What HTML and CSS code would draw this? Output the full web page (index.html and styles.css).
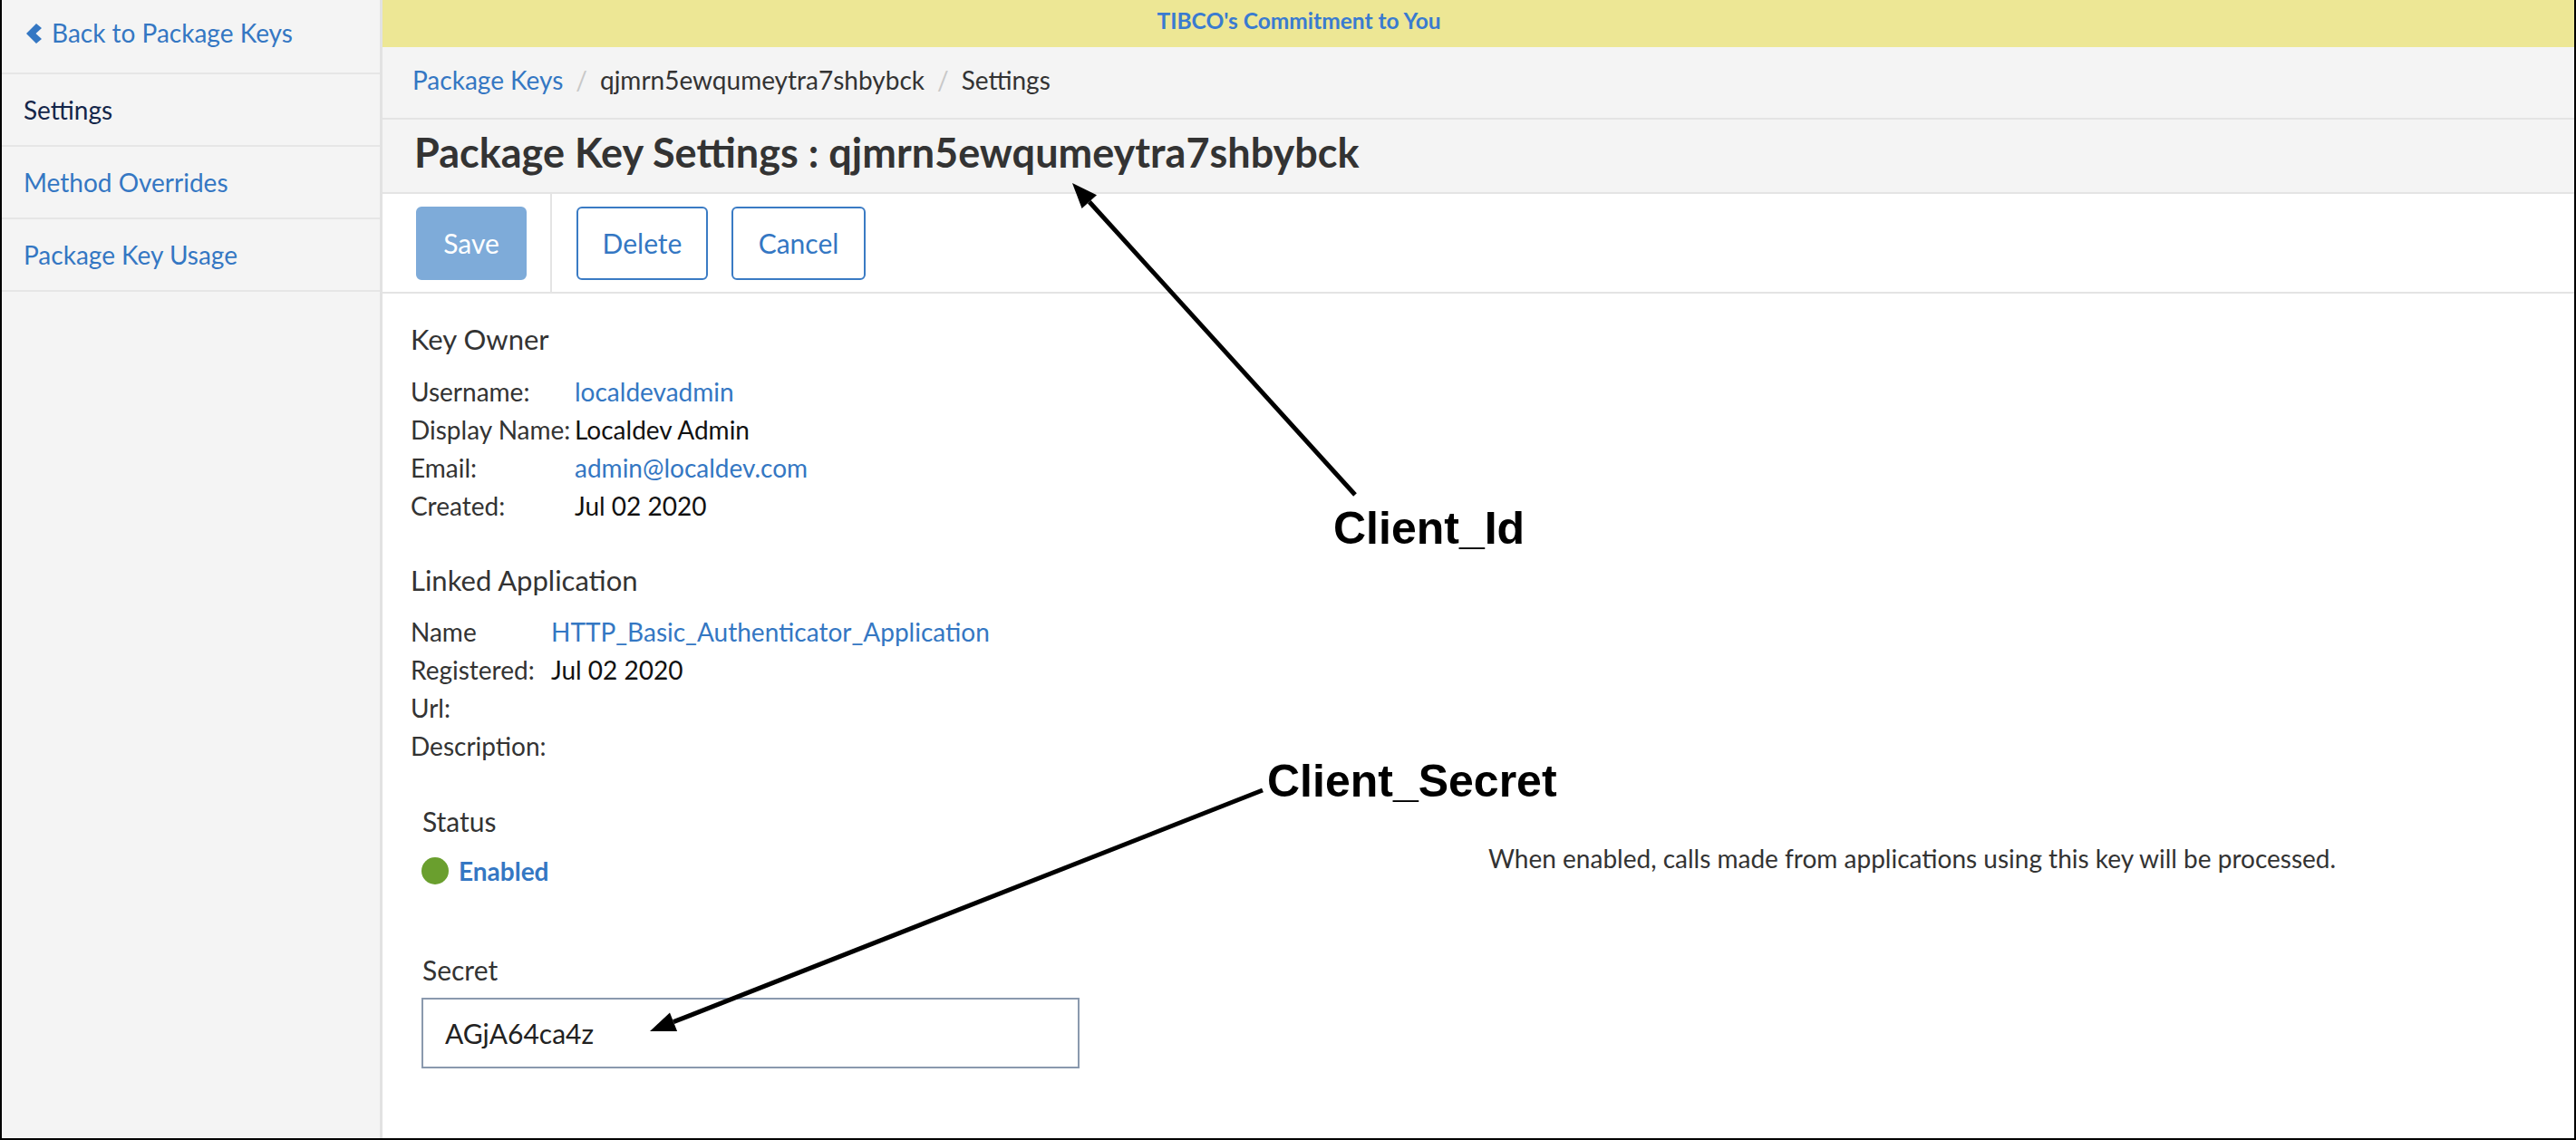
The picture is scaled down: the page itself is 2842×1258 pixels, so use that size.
FILE: index.html
```html
<!DOCTYPE html>
<html>
<head>
<meta charset="utf-8">
<title>Package Key Settings</title>
<link rel="stylesheet" href="styles.css">
</head>
<body>
<div class="frame">
  <aside class="sidebar">
    <a class="side-item back"><svg class="chev" viewBox="0 0 17 22" width="17" height="22"><polygon points="11,0 17,5 10.5,11 17,17 11,22 0,11"/></svg>Back to Package Keys</a>
    <div class="side-item active">Settings</div>
    <a class="side-item">Method Overrides</a>
    <a class="side-item">Package Key Usage</a>
  </aside>
  <main class="main">
    <div class="banner"><a class="banner-link">TIBCO's Commitment to You</a></div>
    <nav class="crumbs">
      <a class="crumb-link">Package Keys</a><span class="sep">/</span><span class="crumb">qjmrn5ewqumeytra7shbybck</span><span class="sep">/</span><span class="crumb">Settings</span>
    </nav>
    <div class="titlebar"><h1 class="title">Package Key Settings : qjmrn5ewqumeytra7shbybck</h1></div>
    <div class="toolbar">
      <div class="tb-primary"><button class="btn btn-save">Save</button></div>
      <div class="tb-secondary">
        <button class="btn btn-outline">Delete</button>
        <button class="btn btn-outline">Cancel</button>
      </div>
    </div>
    <section class="content">
      <h2 class="heading first">Key Owner</h2>
      <div class="info owner">
        <span class="lbl">Username:</span><a class="val link">localdevadmin</a>
        <span class="lbl">Display Name:</span><span class="val">Localdev Admin</span>
        <span class="lbl">Email:</span><a class="val link">admin@localdev.com</a>
        <span class="lbl">Created:</span><span class="val">Jul 02 2020</span>
      </div>
      <h2 class="heading">Linked Application</h2>
      <div class="info app">
        <span class="lbl">Name</span><a class="val link">HTTP_Basic_Authenticator_Application</a>
        <span class="lbl">Registered:</span><span class="val">Jul 02 2020</span>
        <span class="lbl">Url:</span><span class="val"></span>
        <span class="lbl">Description:</span><span class="val"></span>
      </div>
      <div class="status-row">
        <div class="status-col">
          <h2 class="heading sub">Status</h2>
          <div class="enabled"><span class="dot"></span><a class="enabled-link">Enabled</a></div>
          <h2 class="heading sub secret-h">Secret</h2>
          <div class="secret-box">AGjA64ca4z</div>
        </div>
        <div class="help-col">When enabled, calls made from applications using this key will be processed.</div>
      </div>
    </section>
  </main>
  <svg class="annotations" width="2842" height="1258" viewBox="0 0 2842 1258">
    <line x1="1495" y1="546" x2="1201.8" y2="222.7" class="arrow-line"/>
    <polygon points="1183,202 1210,215.3 1193.6,230.1" class="arrow-head"/>
    <text x="1471" y="600" class="note">Client_Id</text>
    <line x1="1393" y1="872" x2="743" y2="1127.7" class="arrow-line"/>
    <polygon points="717,1138 747.1,1138 739,1117.5" class="arrow-head"/>
    <text x="1398" y="879" class="note">Client_Secret</text>
  </svg>
</div>
</body>
</html>
```
FILE: styles.css
```css
html, body {
  margin: 0;
  padding: 0;
}
body {
  font-family: Lato, "Liberation Sans", sans-serif;
  color: #333;
  background: #fff;
}
.frame {
  position: relative;
  display: flex;
  height: 1258px;
  box-sizing: border-box;
  border-left: 2px solid #000;
  border-right: 2px solid #000;
  border-bottom: 2px solid #000;
  overflow: hidden;
}
.sidebar {
  width: 417px;
  flex: none;
  background: #f4f4f4;
  border-right: 3px solid #e2e2e2;
  padding-top: 2px;
}
.side-item {
  display: flex;
  align-items: center;
  height: 78px;
  border-bottom: 2px solid #e6e6e6;
  padding-left: 24px;
  font-size: 28px;
  color: #3477c3;
}
.side-item.back {
  padding-left: 27px;
  padding-bottom: 10px;
  height: 68px;
}
.side-item.active {
  color: #14264a;
}
.chev {
  fill: #3477c3;
  margin-right: 11px;
  margin-top: 2px;
}
.main {
  flex: 1;
  display: flex;
  flex-direction: column;
  min-width: 0;
}
.banner {
  height: 46px;
  padding-bottom: 6px;
  line-height: 46px;
  background: #ede795;
  text-align: center;
  padding-right: 396px;
  font-size: 24.5px;
  font-weight: 700;
}
.banner-link {
  color: #3a7bd0;
}
.crumbs {
  height: 72px;
  padding-bottom: 6px;
  line-height: 72px;
  background: #f4f4f4;
  border-bottom: 2px solid #e4e4e4;
  padding-left: 33px;
  font-size: 28px;
  color: #333;
}
.crumb-link {
  color: #3477c3;
}
.sep {
  color: #c8c8c8;
  padding: 0 14px 0 14px;
}
.titlebar {
  height: 72px;
  padding-bottom: 8px;
  background: #f4f4f4;
  border-bottom: 2px solid #e4e4e4;
  padding-left: 35px;
}
.title {
  margin: 0;
  font-size: 45px;
  line-height: 72px;
  font-weight: 700;
  color: #333;
}
.toolbar {
  display: flex;
  height: 108px;
  border-bottom: 2px solid #e4e4e4;
  background: #fff;
}
.tb-primary {
  padding: 14px 26px 0 37px;
  border-right: 2px solid #e4e4e4;
}
.tb-secondary {
  display: flex;
  gap: 26px;
  padding: 14px 0 0 27px;
  align-items: flex-start;
}
.btn {
  height: 81px;
  box-sizing: border-box;
  border-radius: 6px;
  border: 2px solid #3a7bc4;
  background: #fff;
  color: #3477c3;
  font-family: Lato, "Liberation Sans", sans-serif;
  font-size: 30px;
  line-height: 77px;
  padding: 0 28px;
  margin: 0;
}
.btn-save {
  width: 122px;
  padding: 0;
  background: #7eabd9;
  border-color: #7eabd9;
  color: #fff;
}
.btn-outline:first-child {
  width: 145px;
  padding: 0;
}
.btn-outline:last-child {
  width: 148px;
  padding: 0;
}
.content {
  padding: 0 31px;
}
.heading {
  margin: 41px 0 0 0;
  font-size: 31px;
  line-height: 40px;
  font-weight: 400;
  color: #333;
}
.heading.first {
  margin-top: 30px;
}
.info {
  display: grid;
  margin-top: 16px;
  font-size: 28px;
  line-height: 42px;
}
.info.owner {
  margin-top: 17px;
  grid-template-columns: 181px auto;
}
.info.app {
  grid-template-columns: 155px auto;
}
.lbl {
  color: #333;
  white-space: nowrap;
}
.val {
  color: #111;
  min-height: 42px;
}
.val.link, .link {
  color: #3477c3;
}
.status-row {
  display: grid;
  grid-template-columns: 1fr 1fr;
}
.status-col {
  padding-left: 13px;
}
.heading.sub {
  margin-top: 42px;
  font-size: 30px;
}
.enabled {
  display: flex;
  align-items: center;
  margin-top: 14px;
  height: 42px;
  font-size: 28px;
  line-height: 42px;
}
.dot {
  width: 30px;
  height: 30px;
  border-radius: 50%;
  background: #6a9f2e;
  margin-left: -1px;
  margin-right: 11px;
}
.enabled-link {
  color: #3477c3;
  font-weight: 700;
}
.heading.secret-h {
  margin-top: 68px;
}
.secret-box {
  margin-top: 11px;
  margin-left: -1px;
  width: 726px;
  height: 78px;
  box-sizing: border-box;
  border: 2px solid #8a99ae;
  padding-left: 24px;
  font-size: 30px;
  line-height: 74px;
  color: #222;
}
.help-col {
  padding-top: 82px;
  padding-left: 11px;
  font-size: 28px;
  line-height: 42px;
  color: #333;
}
.annotations {
  position: absolute;
  left: -2px;
  top: 0;
  pointer-events: none;
}
.arrow-line {
  stroke: #000;
  stroke-width: 5;
}
.arrow-head {
  fill: #000;
}
.note {
  font-family: "Liberation Sans", Arial, sans-serif;
  font-weight: 700;
  font-size: 50px;
  fill: #000;
}
```
